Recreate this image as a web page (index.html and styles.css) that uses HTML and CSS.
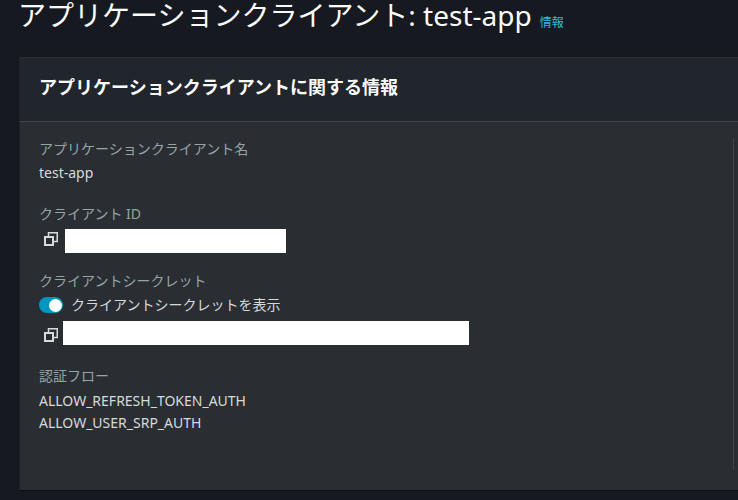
FILE: index.html
```html
<!DOCTYPE html>
<html lang="ja">
<head>
<meta charset="utf-8">
<title>test-app</title>
<link rel="stylesheet" href="styles.css">
</head>
<body>
<main class="page">
  <div class="title-row">
    <h1 class="title">アプリケーションクライアント: test-app</h1>
    <a class="info-link">情報</a>
  </div>
  <section class="card">
    <header class="card-header">
      <h2 class="card-title">アプリケーションクライアントに関する情報</h2>
    </header>
    <div class="card-body">
      <div class="column">
        <div class="field">
          <div class="label">アプリケーションクライアント名</div>
          <div class="value name-value">test-app</div>
        </div>
        <div class="field id-field">
          <div class="label">クライアント ID</div>
          <div class="copy-row">
            <svg class="copy-icon id-icon" viewBox="0 0 14 14" width="14" height="14"><path d="M4.5 4V.75h8.75V9.5H10" fill="none" stroke="#d5dbdb" stroke-width="1.5"/><path d="M1 5h8v8H1z" fill="none" stroke="#d5dbdb" stroke-width="2"/></svg>
            <div class="redacted redacted-id"></div>
          </div>
        </div>
        <div class="field secret-field">
          <div class="label">クライアントシークレット</div>
          <div class="toggle-row">
            <span class="toggle"><span class="knob"></span></span>
            <span class="value">クライアントシークレットを表示</span>
          </div>
          <div class="copy-row secret-row">
            <svg class="copy-icon secret-icon" viewBox="0 0 14 14" width="14" height="14"><path d="M4.5 4V.75h8.75V9.5H10" fill="none" stroke="#d5dbdb" stroke-width="1.5"/><path d="M1 5h8v8H1z" fill="none" stroke="#d5dbdb" stroke-width="2"/></svg>
            <div class="redacted redacted-secret"></div>
          </div>
        </div>
        <div class="field flow-field">
          <div class="label">認証フロー</div>
          <div class="value flow-value">ALLOW_REFRESH_TOKEN_AUTH</div>
          <div class="value">ALLOW_USER_SRP_AUTH</div>
        </div>
      </div>
    </div>
  </section>
</main>
</body>
</html>
```
FILE: styles.css
```css
* { box-sizing: border-box; }
html, body { margin: 0; height: 100%; }
body {
  background: #16191f;
  color: #d5dbdb;
  font-family: "Noto Sans", "Noto Sans CJK JP", sans-serif;
  font-size: 14px;
  overflow: hidden;
}
.page { padding-left: 19px; }
.title-row {
  display: flex;
  align-items: flex-end;
  gap: 8px;
  height: 57px;
  padding-bottom: 26px;
  margin-left: -1px;
}
.title {
  margin: 0;
  font-size: 28px;
  font-weight: 400;
  line-height: 31px;
  color: #fafafa;
  white-space: nowrap;
}
.info-link {
  font-size: 12px;
  line-height: 17px;
  color: #33bbe0;
}
.card {
  height: 434px;
  background: #2a2e33;
  border-top: 1px solid #2a2e33;
  border-bottom: 1px solid #0c0e11;
  border-left: 1px solid #1f2329;
}
.card-header {
  display: flex;
  align-items: center;
  height: 64px;
  padding: 0 0 6px 19px;
  background: #21252c;
  border-bottom: 1px solid #414750;
}
.card-title {
  margin: 0;
  font-size: 18px;
  font-weight: 700;
  line-height: 24px;
  color: #fafafa;
}
.card-body {
  display: flex;
  justify-content: flex-end;
  padding: 16px 4px 0 19px;
}
.column {
  flex: 1;
  height: 332px;
  border-right: 1px solid #414750;
  display: flex;
  flex-direction: column;
}
.field { display: flex; flex-direction: column; }
.id-field { margin-top: 19px; }
.secret-field { margin-top: 17px; }
.flow-field { margin-top: 20px; }
.label {
  color: #95a5a6;
  line-height: 22px;
  font-size: 14px;
}
.value {
  color: #d5dbdb;
  line-height: 22px;
  font-size: 14px;
}
.name-value { margin-top: 2px; }
.flow-value { margin-top: 3px; }
.copy-row {
  display: flex;
  gap: 7px;
  height: 24px;
  margin-top: 4px;
  padding-left: 5px;
}
.secret-row { gap: 5px; margin-top: 5px; }
.copy-icon { display: block; flex: none; }
.id-icon { margin-top: 3px; }
.secret-icon { margin-top: 7px; }
.redacted { background: #fff; height: 24px; }
.redacted-id { width: 221px; }
.redacted-secret { width: 406px; }
.toggle-row { display: flex; align-items: center; gap: 8px; height: 22px; margin-top: 2px; }
.toggle {
  display: flex;
  align-items: center;
  justify-content: flex-end;
  width: 24px;
  height: 16px;
  padding-right: 1px;
  border-radius: 8px;
  background: #0097bf;
}
.knob {
  width: 13px;
  height: 13px;
  border-radius: 50%;
  background: #fff;
}
```
